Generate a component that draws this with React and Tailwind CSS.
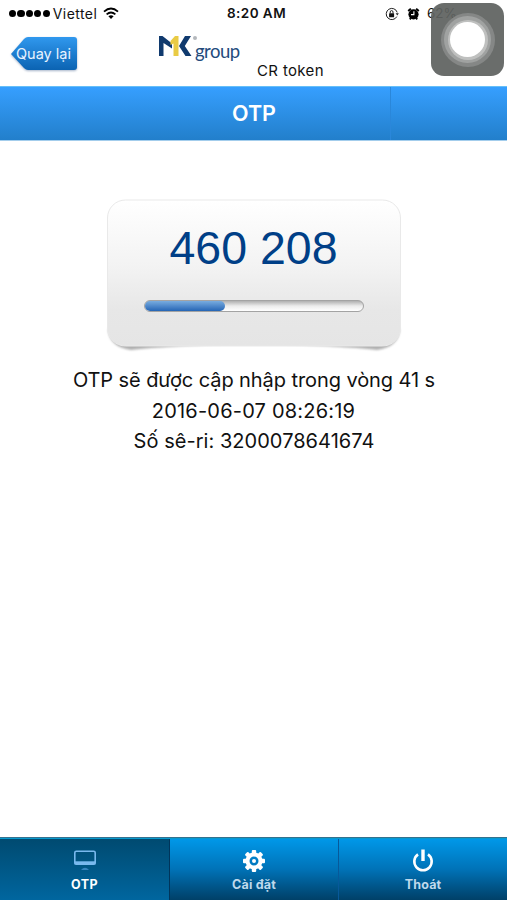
import React from "react";

function StatusBar() {
  return (
    <div className="grid h-[27px] grid-cols-[169px_1fr_169px] items-center text-[13.5px] leading-[27px] text-[#111]">
      <div className="flex items-center pl-[9px]">
        <div className="flex gap-[1.2px]">
          {[0, 1, 2, 3, 4].map((n) => (
            <span key={n} className="h-[7.2px] w-[7.2px] rounded-full bg-black" />
          ))}
        </div>
        <span className="ml-[3px] text-[14px] tracking-[0.45px]">Viettel</span>
        <svg className="ml-[6px] h-[13px] w-[16px]" viewBox="0 0 16 13" fill="none" stroke="#000" strokeWidth="1.8">
          <path d="M1 4.6Q8-1.6 15 4.6M3.6 7.4Q8 3.6 12.4 7.4" />
          <path d="M5.4 9.3Q8 7.2 10.6 9.3L8 12Z" fill="#000" stroke="none" />
        </svg>
      </div>
      <div className="pl-[6px] text-center font-semibold tracking-[0.45px]">8:20 AM</div>
      <div className="flex items-center pl-[47px]">
        <svg className="h-[14px] w-[14px]" viewBox="0 0 14 14" fill="none" stroke="#222" strokeWidth="1">
          <path d="M11.8 9.6A5.6 5.6 0 1 1 12.2 5.4" />
          <path d="M10.6 6.2h3.2L12.3 8.6Z" fill="#222" stroke="none" />
          <rect x="4.1" y="6.2" width="5" height="4" rx=".5" fill="#111" stroke="none" />
          <path d="M5.2 6.5V5a1.4 1.4 0 0 1 2.8 0v1.5" />
        </svg>
        <svg className="ml-[8px] h-[14px] w-[13px]" viewBox="0 0 13 14">
          <circle cx="6.5" cy="7.3" r="5.1" fill="#000" />
          <path d="M1.2 4 3.8 1.6M11.8 4 9.2 1.6M2.8 12.4l1-1.2M10.2 12.4l-1-1.2" stroke="#000" strokeWidth="1.8" />
          <path d="M6.9 4.3v3.3H4" fill="none" stroke="#fff" strokeWidth="1.1" />
        </svg>
        <span className="ml-[7px]">62%</span>
      </div>
    </div>
  );
}

function AssistiveTouch() {
  return (
    <div className="absolute left-[431px] top-[3px] flex h-[73px] w-[73px] items-center justify-center rounded-[13px] bg-[#5f6260]/[.93]">
      <div className="flex h-[54px] w-[54px] items-center justify-center rounded-full bg-[#858786]">
        <div className="flex h-[47px] w-[47px] items-center justify-center rounded-full bg-[#a0a2a1]">
          <div className="flex h-[40px] w-[40px] items-center justify-center rounded-full bg-[#bfc0bf]">
            <div className="h-[35px] w-[35px] rounded-full bg-white" />
          </div>
        </div>
      </div>
    </div>
  );
}

function Header() {
  return (
    <div className="flex h-[59px] items-start">
      <button className="relative ml-[10px] mt-[9px] flex h-[36px] w-[68px] justify-center">
        <svg className="absolute inset-0 h-[36px] w-[68px] drop-shadow-[0_1px_1px_rgba(0,40,100,0.35)]" viewBox="0 0 68 36">
          <defs>
            <linearGradient id="back" x1="0" y1="0" x2="0" y2="1">
              <stop offset="0" stopColor="#3098ee" />
              <stop offset="1" stopColor="#0b63b2" />
            </linearGradient>
          </defs>
          <path d="M1 18 14 3Q16 1 18 1H64Q67 1 67 4V31Q67 34 64 34H18Q16 34 14 32Z" fill="url(#back)" />
        </svg>
        <span className="relative -ml-[1px] text-[14.5px] leading-[35px] text-[#e8f3ff]">Quay lại</span>
      </button>
      <div className="ml-[80px] mt-[7px] flex w-[84px]">
        <svg className="h-[24px] w-[41px] shrink-0" viewBox="0 0 41 24">
          <path d="M1 2H4.5L14 9.5V14.5L5.5 9V22H1Z" fill="#103a6e" />
          <path d="M12.5 7 17 2H20.5V22H15.5V9.5L12.5 11Z" fill="#e9cb45" />
          <path d="M27 2H33L26.8 12 33.5 22H27.5L21 12Z" fill="#103a6e" />
          <circle cx="37" cy="4" r="2" fill="#b4b8bc" />
        </svg>
        <span className="-ml-[4px] mt-[5px] font-['Lato'] text-[18.5px] leading-[24px] tracking-[-0.5px] text-[#234b7c]">group</span>
      </div>
      <span className="ml-[15px] mt-[34px] text-[15px] leading-[20px] tracking-[0.35px] text-[#111]">CR token</span>
    </div>
  );
}

function TokenCard() {
  return (
    <div className="relative mx-auto mt-[58px] h-[154px] w-[298px]">
      <svg className="absolute inset-0 h-[154px] w-[298px]" viewBox="0 0 298 154">
        <defs>
          <linearGradient id="card" x1="0" y1="0" x2="0" y2="1">
            <stop offset="0" stopColor="#fff" />
            <stop offset=".45" stopColor="#f3f3f3" />
            <stop offset=".75" stopColor="#e7e7e7" />
            <stop offset="1" stopColor="#e5e5e5" />
          </linearGradient>
          <filter id="soft" x="-10%" y="-10%" width="120%" height="120%">
            <feGaussianBlur stdDeviation="1.3" />
          </filter>
        </defs>
        <path d="M3 130Q4 148 26 151Q60 147 149 144Q238 147 272 151Q294 148 295 130Z" fill="#b0b0b0" filter="url(#soft)" />
        <rect x="2.5" y="1" width="293" height="146" rx="18" fill="url(#card)" />
        <rect x="2.5" y="1" width="293" height="146" rx="18" fill="none" stroke="#e9e9e9" />
      </svg>
      <div className="relative flex flex-col items-center">
        <div className="mt-[21px] font-['Liberation_Sans'] text-[46.5px] leading-[56px] text-[#003f87]">460 208</div>
        <div className="mt-[24px] h-[12px] w-[220px] overflow-hidden rounded-full border border-[#a3a3a3] bg-linear-to-b from-[#b0b0b0] via-[#ececec] to-white">
          <div className="h-full w-[80px] rounded-r-full bg-linear-to-b from-[#78acdf] to-[#2465b5]" />
        </div>
      </div>
    </div>
  );
}

function Tab({ label, active, children }) {
  return (
    <div
      className={
        active
          ? "flex w-[170px] flex-col items-center border-r border-[#00355b] bg-linear-to-b from-[#004a70] to-[#00669f]"
          : "flex flex-1 flex-col items-center border-r border-[#07599a] bg-linear-to-b from-[#0099ea] via-[#0073b8] to-[#004068] last:border-r-0"
      }
    >
      <div className="mt-[10px] flex h-[26px] items-center">{children}</div>
      <span
        className={
          active
            ? "mt-[3px] text-[12.5px] font-bold leading-[16px] tracking-[0.4px] text-white"
            : "mt-[3px] text-[12.5px] font-bold leading-[16px] tracking-[0.2px] text-[#bfd9ec]"
        }
      >
        {label}
      </span>
    </div>
  );
}

const teeth = [0, 45, 90, 135, 180, 225, 270, 315];

function TabBar() {
  return (
    <div className="relative flex h-[63px] border-t border-[#35718f] after:absolute after:inset-x-0 after:top-0 after:h-[1px] after:bg-[#079ace]">
      <Tab label="OTP" active>
        <svg className="h-[22px] w-[24px]" viewBox="0 0 24 22">
          <rect x="1.8" y="1.3" width="20.4" height="13" rx="1.5" fill="none" stroke="#79b9ee" strokeWidth="1.6" />
          <path d="M1.5 11.3h21v3h-21z" fill="#79b9ee" />
          <path d="M8 20Q12 15.5 16 20Z" fill="#3585bf" />
        </svg>
      </Tab>
      <Tab label="Cài đặt">
        <svg className="h-[24px] w-[24px]" viewBox="0 0 24 24">
          {teeth.map((a) => (
            <rect key={a} x="9.8" y="1" width="4.4" height="6" rx="1" fill="#fff" transform={`rotate(${a} 12 12)`} />
          ))}
          <circle cx="12" cy="12" r="6.5" fill="none" stroke="#fff" strokeWidth="4" />
          <circle cx="12" cy="12" r="2" fill="#fff" />
        </svg>
      </Tab>
      <Tab label="Thoát">
        <svg className="h-[24px] w-[24px]" viewBox="0 0 24 24" fill="none" stroke="#fff">
          <path d="M7 5.4A8.7 8.7 0 1 0 17 5.4" strokeWidth="2.6" />
          <path d="M12 .5v11.5" strokeWidth="3.4" />
        </svg>
      </Tab>
    </div>
  );
}

export default function App() {
  return (
    <div className="relative flex h-[900px] w-[507px] flex-col overflow-hidden bg-white font-['Inter','Liberation_Sans',sans-serif]">
      <StatusBar />
      <Header />
      <div className="flex h-[55px] border-y border-t-[#66bff8] border-b-[#a3cdec] bg-linear-to-b from-[#369fff] to-[#227fcb]">
        <div className="w-[391px] border-r border-[#2a87da] pl-[118px] text-center text-[21.5px] font-semibold leading-[53px] text-white">OTP</div>
      </div>
      <TokenCard />
      <div className="mt-[12px] text-center text-[20px] leading-[30.5px] text-[#111]">
        <div className="pl-[1px] tracking-[-0.08px]">OTP sẽ được cập nhập trong vòng 41 s</div>
        <div className="tracking-[0.2px]">2016-06-07 08:26:19</div>
        <div className="pl-[1px] tracking-[0.04px]">Số sê-ri: 3200078641674</div>
      </div>
      <div className="flex-1" />
      <TabBar />
      <AssistiveTouch />
    </div>
  );
}
